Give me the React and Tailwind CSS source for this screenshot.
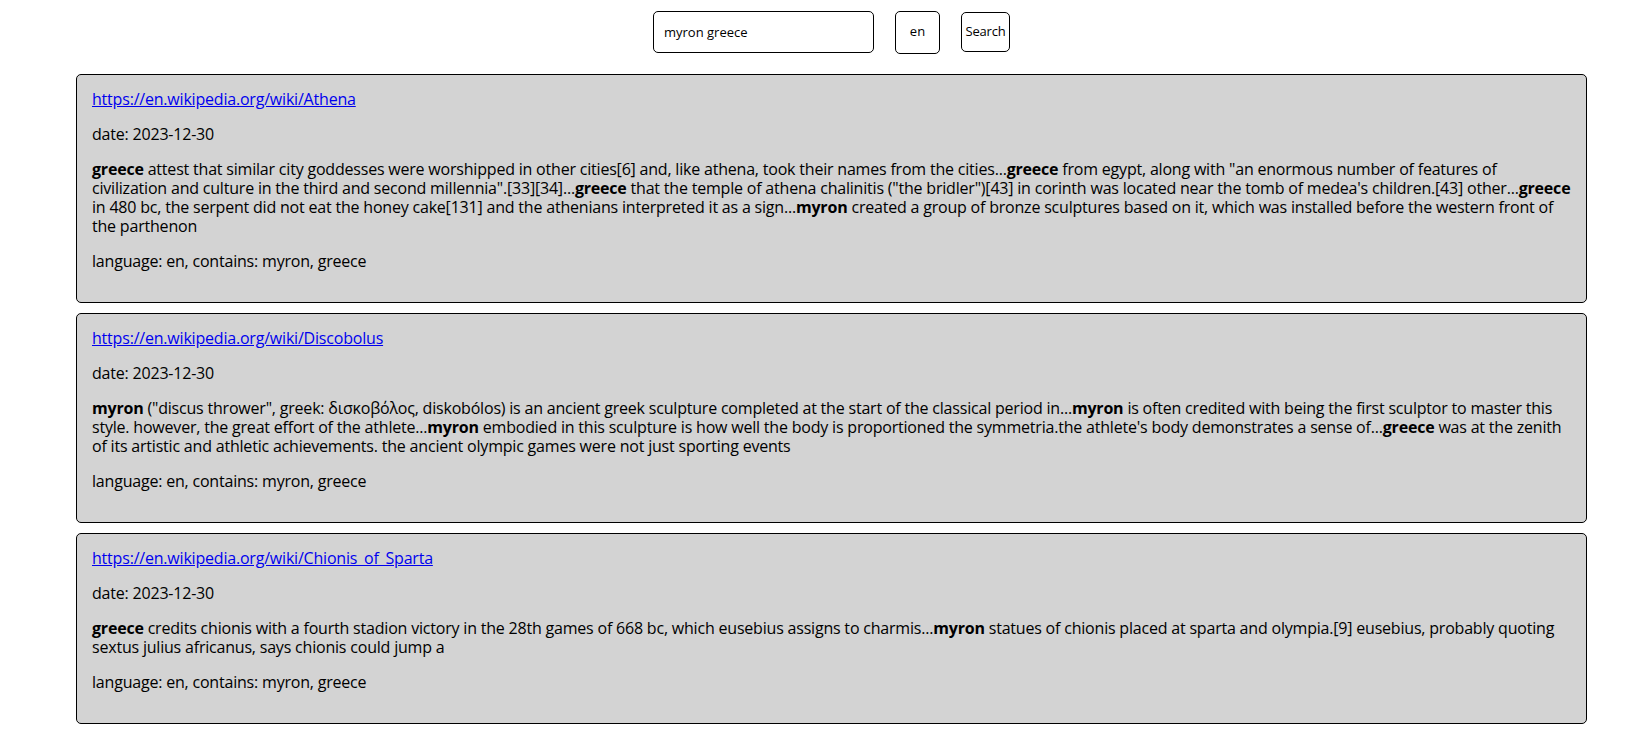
import { useState } from "react";

const results = [
  {
    url: "https://en.wikipedia.org/wiki/Athena",
    date: "2023-12-30",
    snippet:
      "**greece** attest that similar city goddesses were worshipped in other cities[6] and, like athena, took their names from the cities...**greece** from egypt, along with \"an enormous number of features of civilization and culture in the third and second millennia\".[33][34]...**greece** that the temple of athena chalinitis (\"the bridler\")[43] in corinth was located near the tomb of medea's children.[43] other...**greece** in 480 bc, the serpent did not eat the honey cake[131] and the athenians interpreted it as a sign...**myron** created a group of bronze sculptures based on it, which was installed before the western front of the parthenon",
    language: "en",
    contains: ["myron", "greece"],
  },
  {
    url: "https://en.wikipedia.org/wiki/Discobolus",
    date: "2023-12-30",
    snippet:
      "**myron** (\"discus thrower\", greek: δισκοβόλος, diskobólos) is an ancient greek sculpture completed at the start of the classical period in...**myron** is often credited with being the first sculptor to master this style. however, the great effort of the athlete...**myron** embodied in this sculpture is how well the body is proportioned the symmetria.the athlete's body demonstrates a sense of...**greece** was at the zenith of its artistic and athletic achievements. the ancient olympic games were not just sporting events",
    language: "en",
    contains: ["myron", "greece"],
  },
  {
    url: "https://en.wikipedia.org/wiki/Chionis_of_Sparta",
    date: "2023-12-30",
    snippet:
      "**greece** credits chionis with a fourth stadion victory in the 28th games of 668 bc, which eusebius assigns to charmis...**myron** statues of chionis placed at sparta and olympia.[9] eusebius, probably quoting sextus julius africanus, says chionis could jump a",
    language: "en",
    contains: ["myron", "greece"],
  },
];

// **word** -> bold
function Snippet({ text }) {
  const parts = text.split("**");
  return (
    <p className="my-4">
      {parts.map((part, i) => (i % 2 === 1 ? <b key={i}>{part}</b> : part))}
    </p>
  );
}

export default function App() {
  const [query, setQuery] = useState("myron greece");

  return (
    <div className="min-h-screen bg-white text-black font-['Open_Sans',sans-serif]">
      {/* search bar */}
      <div className="h-[64px] flex items-center justify-center gap-[21px] pl-[36px]">
        <input
          value={query}
          onChange={(e) => setQuery(e.target.value)}
          className="w-[221px] h-[42px] border border-black rounded-[5px] px-[10px] text-[13px] outline-none"
        />
        <button className="w-[45px] h-[43px] border border-black rounded-[5px] text-[13px] bg-white">
          en
        </button>
        <button className="w-[49px] h-[40px] border border-black rounded-[5px] text-[13px] tracking-[-0.2px] bg-white">
          Search
        </button>
      </div>

      {/* results */}
      <div className="ml-[76px] mr-[40px] mt-[10px] flex flex-col gap-[10px]">
        {results.map((r) => (
          <div
            key={r.url}
            className="bg-[#d3d3d3] border border-black rounded-[5px] p-[15px] text-[16px] leading-[19px] tracking-[-0.2px]"
          >
            <a href={r.url} className="text-[#0000ee] underline">
              {r.url}
            </a>
            <p className="my-4">date: {r.date}</p>
            <Snippet text={r.snippet} />
            <p className="my-4">
              language: {r.language}, contains: {r.contains.join(", ")}
            </p>
          </div>
        ))}
      </div>
    </div>
  );
}
